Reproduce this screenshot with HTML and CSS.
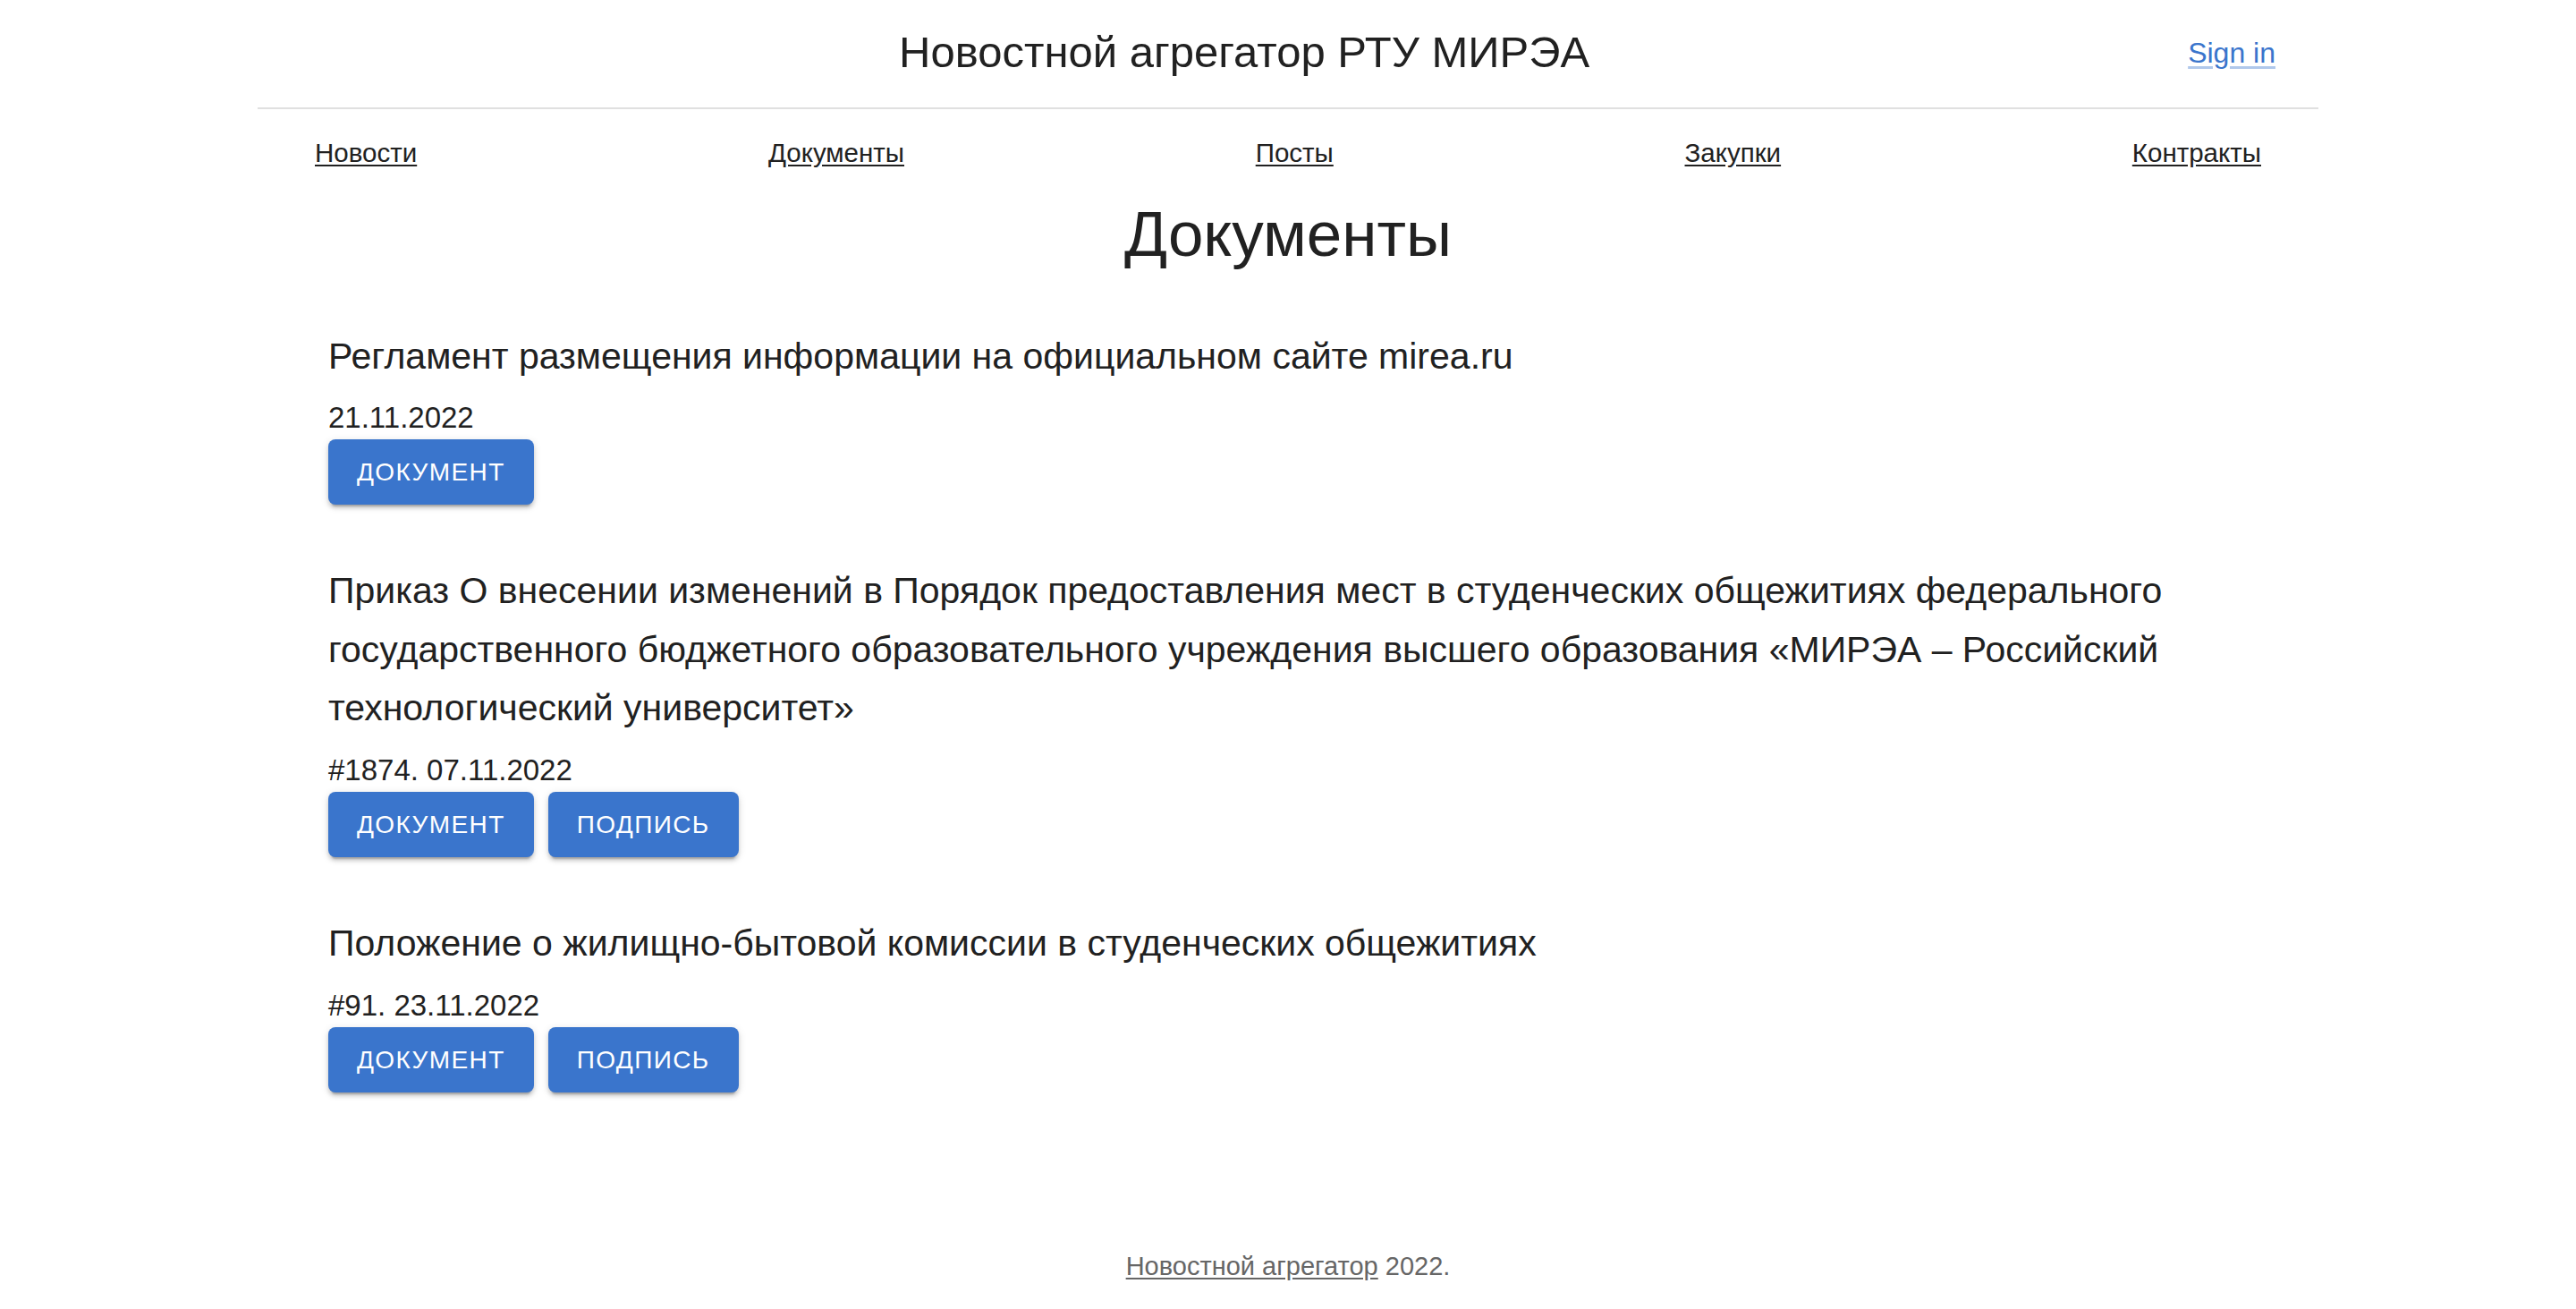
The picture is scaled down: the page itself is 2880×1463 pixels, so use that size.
FILE: index.html
```html
<!DOCTYPE html>
<html lang="ru">
<head>
<meta charset="utf-8">
<title>Новостной агрегатор РТУ МИРЭА</title>
<link rel="stylesheet" href="styles.css">
</head>
<body>
<div class="container">
  <header class="topbar">
    <h2 class="site-title">Новостной агрегатор РТУ МИРЭА</h2>
    <a class="signin" href="#">Sign in</a>
  </header>
  <nav class="mainnav">
    <a href="#">Новости</a>
    <a href="#">Документы</a>
    <a href="#">Посты</a>
    <a href="#">Закупки</a>
    <a href="#">Контракты</a>
  </nav>
  <main>
    <h1 class="page-title">Документы</h1>
    <div class="docs">
      <article class="doc">
        <h6 class="doc-title">Регламент размещения информации на официальном сайте mirea.ru</h6>
        <p class="doc-meta">21.11.2022</p>
        <div class="actions">
          <a class="btn" href="#">Документ</a>
        </div>
      </article>
      <article class="doc">
        <h6 class="doc-title">Приказ О внесении изменений в Порядок предоставления мест в студенческих общежитиях федерального государственного бюджетного образовательного учреждения высшего образования «МИРЭА – Российский технологический университет»</h6>
        <p class="doc-meta">#1874. 07.11.2022</p>
        <div class="actions">
          <a class="btn" href="#">Документ</a>
          <a class="btn" href="#">Подпись</a>
        </div>
      </article>
      <article class="doc">
        <h6 class="doc-title">Положение о жилищно-бытовой комиссии в студенческих общежитиях</h6>
        <p class="doc-meta">#91. 23.11.2022</p>
        <div class="actions">
          <a class="btn" href="#">Документ</a>
          <a class="btn" href="#">Подпись</a>
        </div>
      </article>
    </div>
  </main>
</div>
<footer class="footer">
  <p><a href="#">Новостной агрегатор</a> 2022.</p>
</footer>
</body>
</html>
```

FILE: styles.css
```css
html, body {
  margin: 0;
  padding: 0;
  background: #ffffff;
}
body {
  font-family: "Liberation Sans", Arial, Helvetica, sans-serif;
  color: #212121;
}
.container {
  max-width: 2400px;
  margin: 0 auto;
  padding: 0 48px;
  box-sizing: border-box;
}
.topbar {
  display: flex;
  align-items: center;
  min-height: 120px;
  padding: 0 48px;
  border-bottom: 2px solid #e0e0e0;
}
.site-title {
  flex: 1;
  margin: 0 0 2px;
  text-align: center;
  font-size: 49px;
  font-weight: 400;
  line-height: 1.3;
  white-space: nowrap;
}
.signin {
  margin-bottom: 2px;
  font-size: 32px;
  line-height: 1.5;
  color: #3a75cc;
  text-decoration: underline;
  text-decoration-color: rgba(58, 117, 204, 0.4);
  text-underline-offset: 4px;
}
.mainnav {
  display: flex;
  justify-content: space-between;
  align-items: center;
  min-height: 96px;
  padding: 0 48px;
}
.mainnav a {
  padding: 16px;
  margin-top: 2px;
  font-size: 29.5px;
  line-height: 1.43;
  color: #212121;
  text-decoration: underline;
  text-underline-offset: 3px;
  white-space: nowrap;
}
.page-title {
  margin: 0;
  text-align: center;
  font-size: 71px;
  font-weight: 400;
  line-height: 1.235;
}
.docs {
  padding: 60px 79px 0;
}
.doc {
  margin-bottom: 64px;
}
.doc-title {
  margin: 0;
  font-size: 41px;
  font-weight: 400;
  line-height: 1.6;
}
.doc-meta {
  margin: 12px 0 0;
  font-size: 33px;
  line-height: 48px;
}
.actions {
  display: flex;
  gap: 16px;
}
.btn {
  display: inline-flex;
  align-items: center;
  justify-content: center;
  padding: 12px 32px;
  border-radius: 8px;
  background: #3a75cc;
  color: #ffffff;
  font-size: 28px;
  line-height: 1.75;
  letter-spacing: 1.4px;
  text-transform: uppercase;
  text-decoration: none;
  box-shadow: 0 6px 2px -4px rgba(0, 0, 0, 0.2), 0 4px 4px 0 rgba(0, 0, 0, 0.14), 0 2px 10px 0 rgba(0, 0, 0, 0.12);
}
.footer {
  padding: 110px 0 29px;
  text-align: center;
}
.footer p {
  margin: 0;
  font-size: 29px;
  line-height: 40px;
  color: #666666;
}
.footer a {
  color: #666666;
  text-decoration: underline;
  text-underline-offset: 3px;
}
```
